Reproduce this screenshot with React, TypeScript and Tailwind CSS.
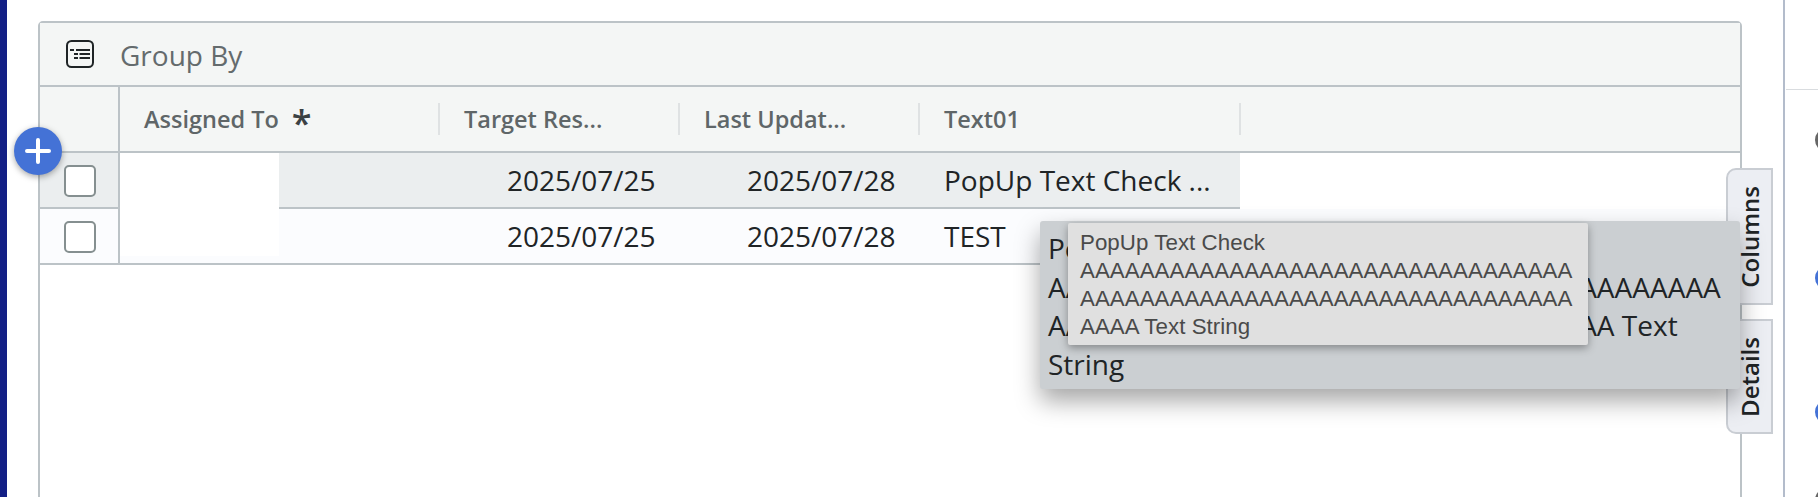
const font = { fontFamily: '"Open Sans", "Noto Sans", sans-serif' };

function ListIcon() {
  return (
    <svg width="28" height="28" viewBox="0 0 28 28" fill="none" className="shrink-0">
      <rect x="1" y="1" width="26" height="26" rx="4.5" stroke="#1f2426" strokeWidth="2" />
      <path d="M4 10h4M10 10h14M8 14h4M13.500 14h10.500M8 18h4M13.500 18h10.500" stroke="#1f2426" strokeWidth="1.800" />
    </svg>
  );
}

function Checkbox() {
  return <div className="w-[32px] h-[32px] rounded-[5px] border-2 border-[#858f90] bg-white" />;
}

function HeaderCell({ label, width }: { label: string; width: string }) {
  return (
    <div className={`${width} shrink-0 h-[32px] flex items-center pl-[24px] pt-[2px] border-r-2 border-[#dfe2e3] text-[23.500px] font-semibold text-[#5f6668] whitespace-nowrap`}>
      {label}
    </div>
  );
}

function DataCells({ date1, date2, text }: { date1: string; date2: string; text: string }) {
  return (
    <div className="flex items-center pl-[228px] text-[28px] text-[#202426] whitespace-nowrap">
      <div className="w-[240px] shrink-0">{date1}</div>
      <div className="w-[197px] shrink-0">{date2}</div>
      <div>{text}</div>
    </div>
  );
}

export default function App() {
  return (
    <div className="w-[1818px] h-[497px] bg-white overflow-hidden flex" style={font}>
      <div className="w-[7px] shrink-0 bg-[#131f85]" />
      <div className="flex-1 pl-[31px] pt-[21px] relative">
        <div className="w-[1704px] h-[600px] border-2 border-[#bcc3c7] rounded-t-[5px] relative">
          <div className="h-[64px] bg-[#f4f6f5] border-b-2 border-[#bcc3c7] flex items-center pl-[26px] gap-[26px]">
            <ListIcon />
            <span className="text-[28px] text-[#646b6d] pt-[1px]">Group By</span>
          </div>
          <div className="h-[66px] bg-[#f4f6f5] border-b-2 border-[#bcc3c7] flex">
            <div className="w-[80px] shrink-0 border-r-2 border-[#bcc3c7]" />
            <div className="flex items-center">
              <div className="w-[320px] shrink-0 h-[32px] flex items-center pl-[24px] pt-[2px] border-r-2 border-[#dfe2e3] text-[23.500px] font-semibold text-[#5f6668] whitespace-nowrap">
                Assigned To
                <span className="ml-[13px] text-[36px] leading-none text-[#3b4143] mt-[6px]">*</span>
              </div>
              <HeaderCell label="Target Res..." width="w-[240px]" />
              <HeaderCell label="Last Updat..." width="w-[240px]" />
              <HeaderCell label="Text01" width="w-[321px]" />
            </div>
          </div>

          {/* row 1 */}
          <div className="flex h-[56px]">
            <div className="w-[80px] shrink-0 bg-[#ebeeef] border-r-2 border-b-2 border-[#bcc3c7] flex items-center justify-center pl-[2px] pt-[2px]">
              <Checkbox />
            </div>
            <div className="w-[159px] shrink-0 bg-white" />
            <div className="w-[961px] shrink-0 bg-[#ebeeef] border-b-2 border-[#bcc3c7] flex items-center">
              <DataCells date1="2025/07/25" date2="2025/07/28" text="PopUp Text Check ..." />
            </div>
          </div>

          {/* row 2 */}
          <div className="flex h-[56px] border-b-2 border-[#bcc3c7]">
            <div className="w-[80px] shrink-0 bg-[#fbfcfe] border-r-2 border-[#bcc3c7] flex items-center justify-center pl-[2px] pt-[2px]">
              <Checkbox />
            </div>
            <div className="w-[159px] shrink-0 bg-[#fbfcfe]">
              <div className="h-[47px] bg-white" />
            </div>
            <div className="flex-1 bg-[#fbfcfe] flex items-center">
              <DataCells date1="2025/07/25" date2="2025/07/28" text="TEST" />
            </div>
          </div>
        </div>

        {/* add row */}
        <button className="absolute left-[7px] top-[127px] w-[48px] h-[48px] rounded-full bg-[#4472d6] shadow-[0_2px_6px_rgba(0,0,0,0.35)] flex items-center justify-center">
          <svg width="26" height="26" viewBox="0 0 26 26">
            <path d="M13 2v22M2 13h22" stroke="#fff" strokeWidth="4" strokeLinecap="round" />
          </svg>
        </button>

        {/* side tabs */}
        <div className="absolute left-[1719px] top-[168px] w-[47px] h-[137px] bg-[#eceef3] border-2 border-[#c9cdd3] rounded-tl-[10px] flex items-center justify-center">
          <span className="[writing-mode:vertical-rl] rotate-180 text-[24px] font-semibold text-[#202426] leading-none">Columns</span>
        </div>
        <div className="absolute left-[1719px] top-[319px] w-[47px] h-[115px] bg-[#eceef3] border-2 border-[#c9cdd3] rounded-bl-[10px] flex items-center justify-center">
          <span className="[writing-mode:vertical-rl] rotate-180 text-[24px] font-semibold text-[#202426] leading-none">Details</span>
        </div>

        {/* cell popup */}
        <div className="absolute left-[1033px] top-[221px] w-[700px] h-[168px] bg-[#cbcfd2] rounded-[3px] shadow-[0_12px_24px_rgba(0,0,0,0.35)] pl-[8px] pt-[8px] text-[28px] leading-[38.500px] text-[#202426] whitespace-pre">
          {'PopUp Text Check\nAAAAAAAAAAAAAAAAAAAAAAAAAAAAAAAAAAAAAA\nAAAAAAAAAAAAAAAAAAAAAAAAAAAAAAAA Text\nString'}
        </div>

        {/* native title tooltip */}
        <div className="absolute left-[1061px] top-[223px] w-[520px] h-[122px] bg-[#e0e0e0] rounded-[2px] shadow-[0_3px_8px_rgba(0,0,0,0.35)] pl-[12px] pt-[6px] text-[22.300px] leading-[28px] tracking-[0.05px] text-[#4a4a4a] whitespace-pre" style={{ fontFamily: '"Liberation Sans", sans-serif' }}>
          {'PopUp Text Check\nAAAAAAAAAAAAAAAAAAAAAAAAAAAAAAAAA\nAAAAAAAAAAAAAAAAAAAAAAAAAAAAAAAAA\nAAAA Text String'}
        </div>
      </div>
      <div className="w-[35px] shrink-0 border-l-2 border-[#b3bccb] relative overflow-hidden">
        <div className="absolute left-[1px] right-0 top-[89px] h-[1px] bg-[#d9dcdf]" />
        <div className="absolute left-[30px] top-[128px] w-[24px] h-[24px] rounded-full bg-[#666]" />
        <div className="absolute left-[30px] top-[266px] w-[24px] h-[24px] rounded-full bg-[#4472d6]" />
        <div className="absolute left-[30px] top-[400px] w-[24px] h-[24px] rounded-full bg-[#4472d6]" />
        <div className="absolute left-[30px] top-[488px] w-[24px] h-[24px] rounded-full bg-[#666]" />
      </div>
    </div>
  );
}
